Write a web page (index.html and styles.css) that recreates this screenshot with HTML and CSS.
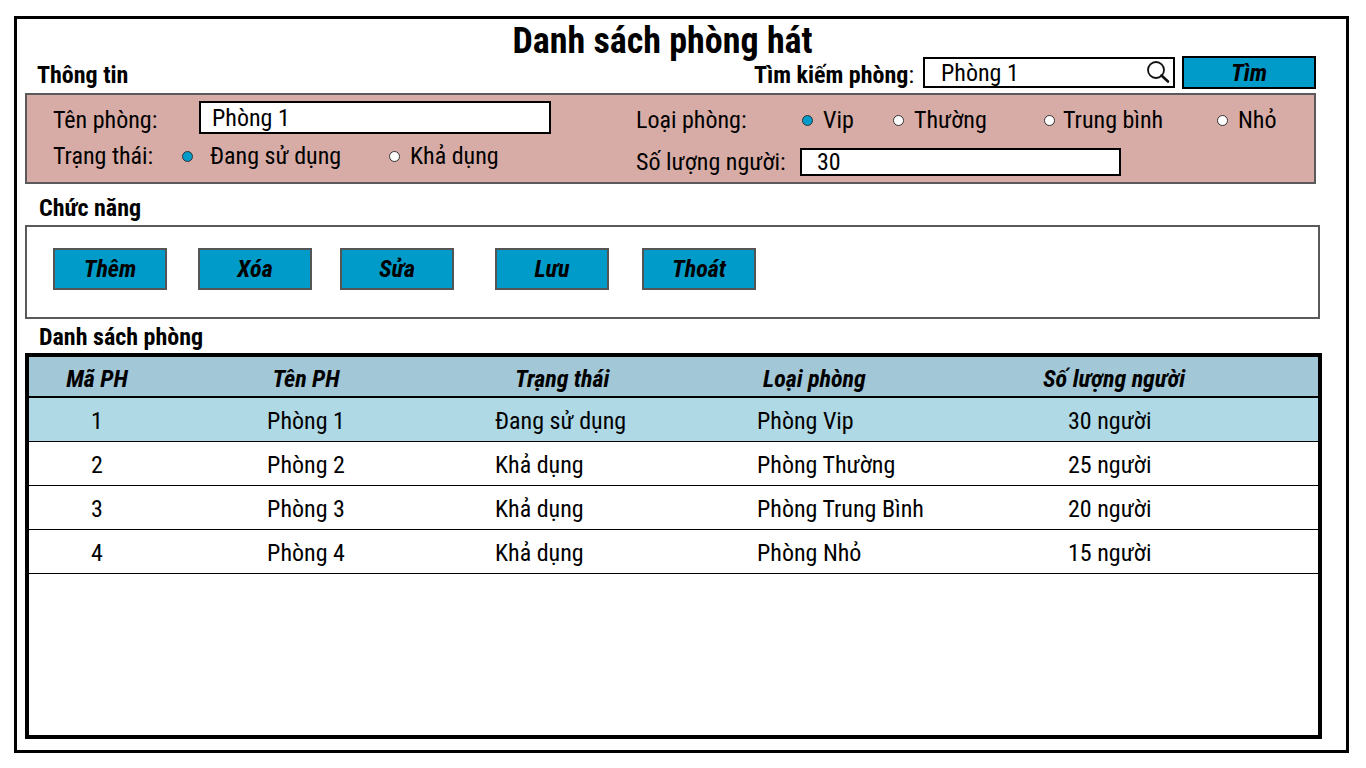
FILE: index.html
```html
<!DOCTYPE html>
<html lang="vi">
<head>
<meta charset="utf-8">
<meta name="viewport" content="width=device-width, initial-scale=1">
<title>Danh sách phòng hát</title>
<link rel="stylesheet" href="styles.css">
</head>
<body>
<main class="window">
  <h1 class="title">Danh sách phòng hát</h1>

  <div class="topbar">
    <h2 class="section-title">Thông tin</h2>
    <form class="search">
      <label class="search-label" for="search"><b>Tìm kiếm phòng</b>:</label>
      <div class="search-box">
        <input class="search-input" id="search" type="text" value="Phòng 1">
        <svg class="search-icon" viewBox="0 0 24 24" aria-hidden="true">
          <circle cx="10" cy="9" r="8" fill="none" stroke="#111" stroke-width="1.8"/>
          <path d="M15.5 14.5L22 20.500" stroke="#111" stroke-width="2.6" stroke-linecap="round"/>
        </svg>
      </div>
      <button class="button search-button" type="button">Tìm</button>
    </form>
  </div>

  <form class="panel info">
    <div class="info-column">
      <div class="field name-row">
        <label class="label-left" for="name">Tên phòng:</label>
        <input class="text-input name-input" id="name" type="text" value="Phòng 1">
      </div>
      <div class="field status-row" role="radiogroup" aria-labelledby="status-label">
        <span class="label-status" id="status-label">Trạng thái:</span>
        <label class="choice status-busy"><input class="radio" type="radio" name="status" checked>Đang sử dụng</label>
        <label class="choice"><input class="radio" type="radio" name="status">Khả dụng</label>
      </div>
    </div>
    <div class="info-column">
      <div class="field type-row" role="radiogroup" aria-labelledby="type-label">
        <span class="label-type" id="type-label">Loại phòng:</span>
        <label class="choice type-vip"><input class="radio" type="radio" name="type" checked>Vip</label>
        <label class="choice type-normal"><input class="radio" type="radio" name="type">Thường</label>
        <label class="choice type-medium"><input class="radio" type="radio" name="type">Trung bình</label>
        <label class="choice"><input class="radio" type="radio" name="type">Nhỏ</label>
      </div>
      <div class="field count-row">
        <label class="label-count" for="count">Số lượng người:</label>
        <input class="text-input count-input" id="count" type="text" value="30">
      </div>
    </div>
  </form>

  <h2 class="section-title heading-actions">Chức năng</h2>
  <div class="panel actions">
    <button class="button action" type="button">Thêm</button>
    <button class="button action" type="button">Xóa</button>
    <button class="button action" type="button">Sửa</button>
    <button class="button action" type="button">Lưu</button>
    <button class="button action" type="button">Thoát</button>
  </div>

  <h2 class="section-title heading-list">Danh sách phòng</h2>
  <div class="list">
    <table class="rooms">
      <colgroup><col class="col-id"><col class="col-name"><col class="col-status"><col class="col-type"><col class="col-count"></colgroup>
      <thead>
        <tr><th class="center">Mã PH</th><th class="center name-cell">Tên PH</th><th class="status-head">Trạng thái</th><th class="type-head">Loại phòng</th><th>Số lượng người</th></tr>
      </thead>
      <tbody>
        <tr class="selected"><td class="center">1</td><td class="center name-cell">Phòng 1</td><td>Đang sử dụng</td><td>Phòng Vip</td><td class="count-cell">30 người</td></tr>
        <tr><td class="center">2</td><td class="center name-cell">Phòng 2</td><td>Khả dụng</td><td>Phòng Thường</td><td class="count-cell">25 người</td></tr>
        <tr><td class="center">3</td><td class="center name-cell">Phòng 3</td><td>Khả dụng</td><td>Phòng Trung Bình</td><td class="count-cell">20 người</td></tr>
        <tr><td class="center">4</td><td class="center name-cell">Phòng 4</td><td>Khả dụng</td><td>Phòng Nhỏ</td><td class="count-cell">15 người</td></tr>
      </tbody>
    </table>
  </div>
</main>
</body>
</html>
```

FILE: styles.css
```css
* { box-sizing: border-box; }

body {
  margin: 0;
  min-height: 100vh;
  display: flex;
  padding: 16px 17px 15px 14px;
  background: #fff;
  color: #000;
  font-family: "Roboto Condensed", Roboto, sans-serif;
  font-size: 24px;
  line-height: 28px;
}

input, button { font: inherit; color: inherit; }

.window {
  flex: 1;
  min-width: 0;
  display: flex;
  flex-direction: column;
  padding: 8px 24px 11px 8px;
  border: 3px solid #000;
}

.title {
  margin: 0;
  padding-right: 22px;
  font-size: 36px;
  line-height: 29px;
  text-align: center;
}

.section-title {
  margin: 0;
  padding-left: 14px;
  font-size: 24px;
}

.topbar {
  display: flex;
  align-items: center;
  justify-content: space-between;
  margin: 0 6px 4px 0;
}

.topbar .section-title { padding: 4px 0 0 12px; }

.search { display: flex; align-items: center; }
.search-label { margin-right: 9px; padding-top: 5px; }

.search-box {
  display: flex;
  align-items: center;
  width: 252px;
  height: 31px;
  margin-right: 7px;
  padding: 0 3px 0 16px;
  border: 2px solid #000;
}

.search-input {
  flex: 1;
  min-width: 0;
  padding: 0;
  border: 0;
  background: none;
  outline: none;
}

.search-icon { width: 24px; height: 24px; }

.button {
  padding: 0;
  border: 2px solid #555;
  border-radius: 0;
  background: #009bc8;
  font-weight: bold;
  font-style: italic;
}

.search-button { width: 134px; height: 33px; border-color: #000; }

.panel { border: 2px solid #5a5a5c; }

.info {
  display: grid;
  grid-template-columns: 583fr 678fr;
  margin-right: 6px;
  padding: 6px 0 6px 26px;
  background: #d7aca6;
}

.info-column { display: flex; flex-direction: column; }
.field { display: flex; align-items: center; white-space: nowrap; }

.text-input {
  border: 2px solid #000;
  border-radius: 0;
  background: #fff;
  outline: none;
}

.label-left { width: 146px; padding-top: 5px; }
.label-status { width: 129px; }
.label-type { width: 166px; }
.label-count { width: 164px; }

.name-input { width: 352px; height: 33px; padding: 0 11px; }
.count-input { width: 321px; height: 28px; padding: 0 15px; }
.status-row { margin-top: 8px; }
.type-row { height: 38px; }
.count-row { margin-top: 9px; }

.choice { display: flex; align-items: center; gap: 10px; }
.status-busy { width: 207px; gap: 17px; }
.type-vip { width: 91px; }
.type-normal { width: 151px; }
.type-medium { width: 173px; gap: 8px; }

.radio {
  appearance: none;
  width: 11px;
  height: 11px;
  margin: 0;
  border: 1px solid #333;
  border-radius: 50%;
  background: #fff;
}

.radio:checked { background: #009bc8; }

.heading-actions { margin: 10px 0 3px; }

.actions {
  display: grid;
  grid-template-columns: 145px 142px 155px 147px 114px;
  margin-right: 2px;
  padding: 21px 26px 27px;
}

.action { width: 114px; height: 42px; }

.heading-list { margin: 4px 0 2px; }

.list {
  flex: 1;
  border: 4px solid #000;
}

.rooms {
  width: 100%;
  table-layout: fixed;
  border-collapse: collapse;
}

.rooms th, .rooms td { padding: 4px 0 0; text-align: left; }
.rooms th { height: 40px; border-bottom: 2px solid #000; background: #a2c7d6; font-style: italic; }
.rooms td { height: 44px; border-bottom: 1px solid #000; }
.rooms .center { text-align: center; }
.rooms .name-cell { padding-right: 48px; }
.rooms .status-head { padding-left: 20px; }
.rooms .type-head { padding-left: 6px; }
.rooms .count-cell { padding-left: 25px; }
.selected { background: #aed9e5; }

.col-id { width: 136px; }
.col-name { width: 330px; }
.col-status { width: 262px; }
.col-type { width: 286px; }
```
